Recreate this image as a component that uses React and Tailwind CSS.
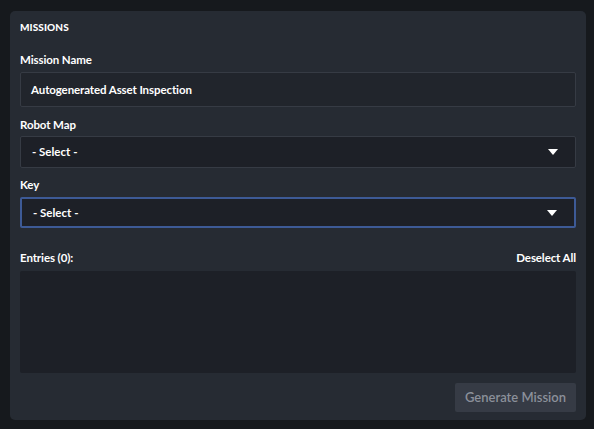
import React from 'react';

const font = { fontFamily: 'Lato, "Noto Sans", sans-serif' };

function Caret() {
  return (
    <svg width="12" height="8" viewBox="0 0 12 8" className="shrink-0">
      <path d="M1 1h10L6 7z" fill="#ffffff" />
    </svg>
  );
}

function SelectBox({ focused }) {
  return (
    <div
      className={`flex items-center justify-between pl-[11px] pr-[16px] bg-[#1d2027] rounded-[2px] ${
        focused ? 'h-[31px] border-2 border-[#3d5a96]' : 'h-[32px] border border-[#363b44]'
      }`}
    >
      <span className="text-[11.5px] font-bold text-white">- Select -</span>
      <Caret />
    </div>
  );
}

export default function App() {
  return (
    <div className="w-[594px] h-[429px] bg-[#16191d] pt-[11px] px-[10px]" style={font}>
      <div className="w-[576px] h-[409px] bg-[#262b33] rounded-[5px] px-[10px] pt-[9px] flex flex-col">
        {/* Header */}
        <h3 className="text-[10px] font-black text-white tracking-[0.1px] leading-[14px] uppercase">Missions</h3>

        {/* Mission name */}
        <label className="mt-[18px] text-[11.5px] font-bold text-white leading-[16px] tracking-[-0.1px]">Mission Name</label>
        <div className="mt-[4px] h-[35px] flex items-center px-[10px] bg-[#21252c] border border-[#363b44] rounded-[2px]">
          <span className="text-[11.5px] font-bold text-white tracking-[-0.1px]">Autogenerated Asset Inspection</span>
        </div>

        {/* Robot map */}
        <label className="mt-[10px] text-[11.5px] font-bold text-white leading-[16px] tracking-[-0.1px]">Robot Map</label>
        <div className="mt-[3px]">
          <SelectBox />
        </div>

        {/* Key */}
        <label className="mt-[9px] text-[11.5px] font-bold text-white leading-[16px] tracking-[-0.1px]">Key</label>
        <div className="mt-[4px]">
          <SelectBox focused />
        </div>

        {/* Entries */}
        <div className="mt-[22px] flex items-center justify-between text-[11.5px] font-bold text-white leading-[16px] tracking-[-0.1px]">
          <span>Entries (0):</span>
          <span>Deselect All</span>
        </div>
        <div className="mt-[5px] h-[102px] bg-[#1d2027] rounded-[2px]"></div>

        <div className="mt-[10px] flex justify-end">
          <button className="h-[29px] w-[121px] bg-[#363b45] rounded-[2px] text-[13px] font-semibold text-[#8b909a]">
            Generate Mission
          </button>
        </div>
      </div>
    </div>
  );
}
